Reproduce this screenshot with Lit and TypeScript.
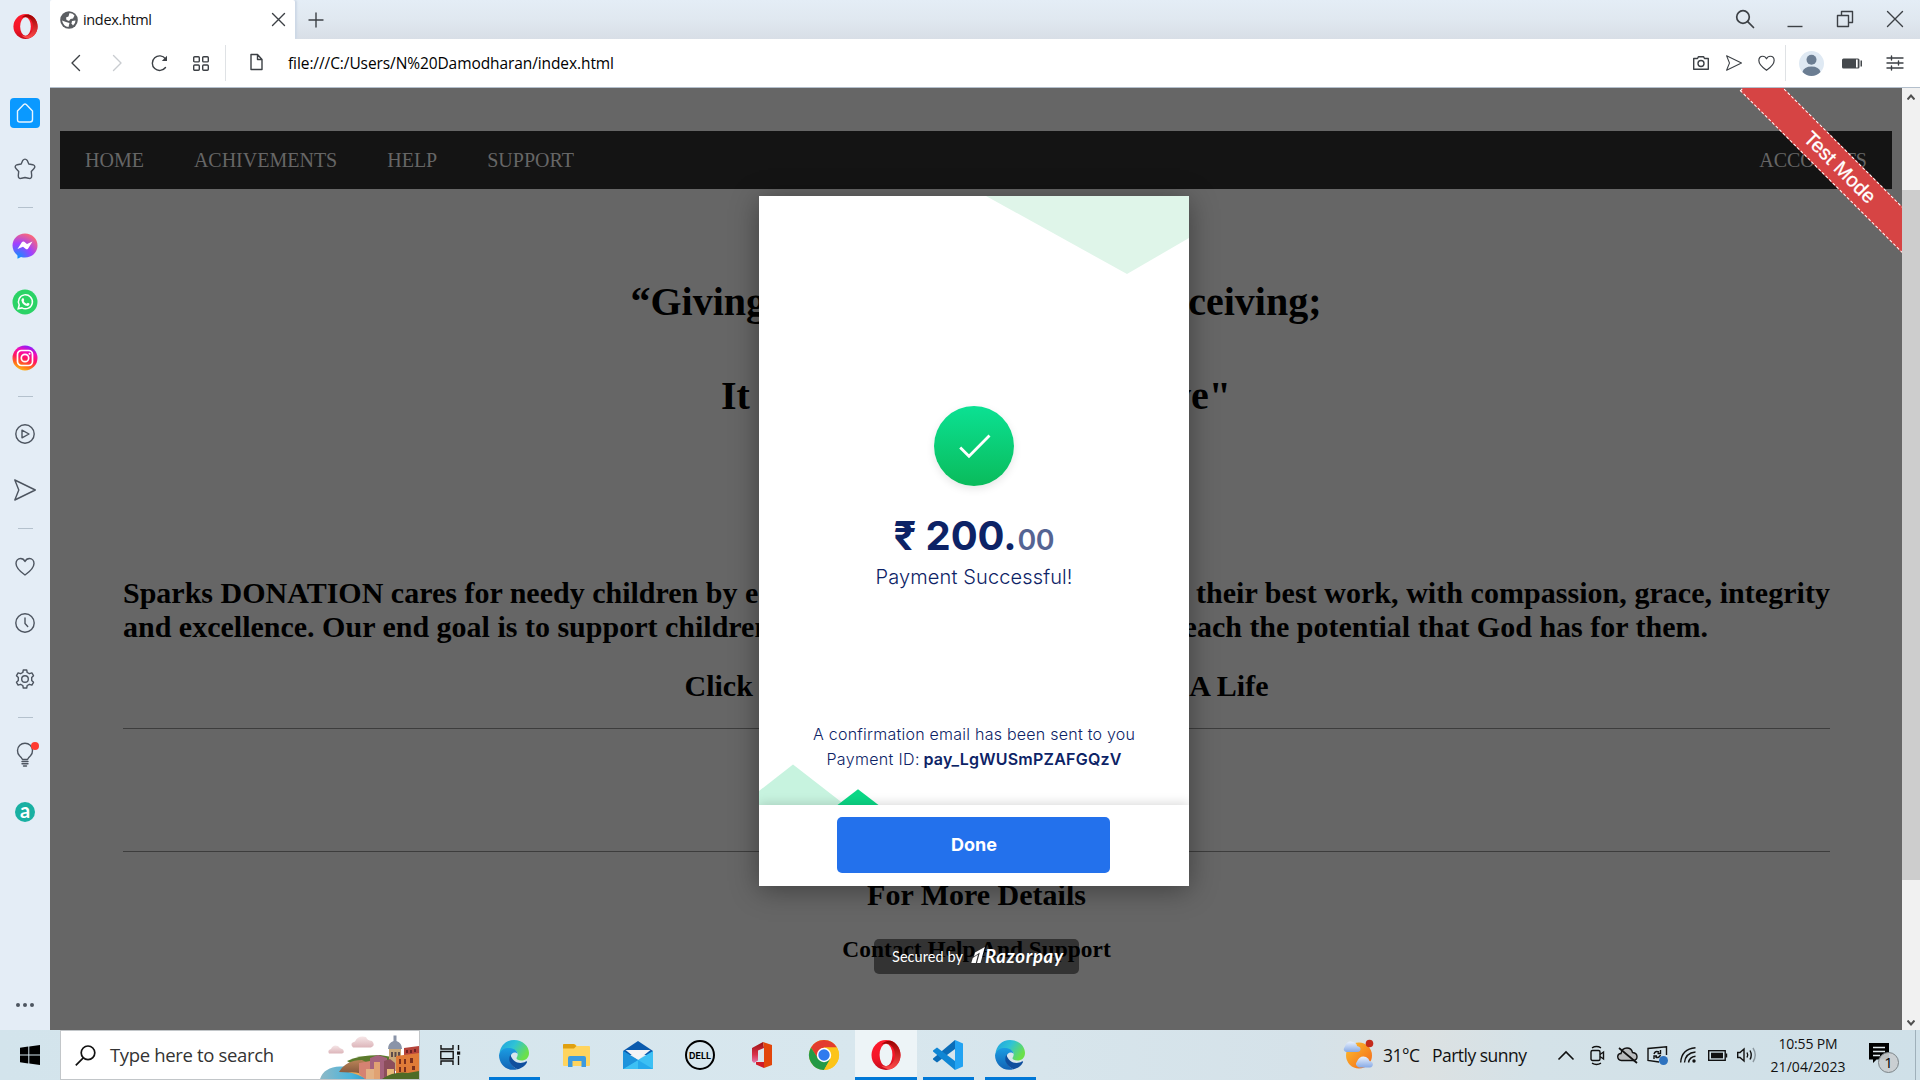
import { LitElement, html, svg, css } from "lit";
import { customElement, property } from "lit/decorators.js";

/* Single-line label whose tracking is adjusted so it spans a given width. */
@customElement("fit-text")
class FitText extends LitElement {
  static styles = css`
    :host { display: inline-block; white-space: pre; }
    .t { display: inline-block; }
  `;
  @property() label = "";
  @property({ type: Number }) span = 0;
  render() {
    return html`<span class="t">${this.label}</span>`;
  }
  firstUpdated() {
    const el = this.renderRoot.querySelector(".t") as HTMLElement;
    if (!this.span) return;
    const gap = (this.span - el.getBoundingClientRect().width) / (this.label.length - 1);
    el.style.letterSpacing = gap + "px";
    el.style.marginRight = -gap + "px";
  }
}

const fit = (label: string, span: number) => html`<fit-text .label=${label} .span=${span}></fit-text>`;
const icon = (w: number, h: number, body: unknown, cls = "line") =>
  html`<svg class=${cls} width=${w} height=${h} viewBox="0 0 ${w} ${h}">${body}</svg>`;

const operaLogo = (s: number) => html`<svg width=${s} height=${s} viewBox="0 0 30 30">
  <defs>
    <linearGradient id="opA" x1="0" y1="0" x2="0" y2="1"><stop offset="0" stop-color="#ff1b2d"/><stop offset=".6" stop-color="#f31628"/><stop offset="1" stop-color="#c20a1a"/></linearGradient>
    <linearGradient id="opB" x1="0" y1="0" x2="0" y2="1"><stop offset="0" stop-color="#9c0000"/><stop offset="1" stop-color="#ff4b4b"/></linearGradient>
  </defs>
  <ellipse cx="15" cy="15" rx="14.5" ry="15" fill="url(#opA)"/>
  <path d="M10 4.500C13 1.500 17 .2 19.500.8C26 2.500 29.500 9 29.500 15S26 27.500 19.500 29.200C17 29.800 13 28.500 10 25.500C20 29 24 21 24 15S20 1 10 4.500Z" fill="url(#opB)"/>
  <ellipse cx="15" cy="15" rx="6.400" ry="11.200" fill="var(--hole, #e4edf6)"/>
</svg>`;

const edgeLogo = () => html`<svg width="30" height="30" viewBox="0 0 30 30">
  <defs>
    <linearGradient id="edA" x1="0" y1="0" x2="1" y2=".5"><stop offset="0" stop-color="#1f9fe0"/><stop offset=".5" stop-color="#2fc3d6"/><stop offset="1" stop-color="#6be04a"/></linearGradient>
    <linearGradient id="edB" x1="0" y1="0" x2="0" y2="1"><stop offset="0" stop-color="#1b9de2"/><stop offset="1" stop-color="#1263b5"/></linearGradient>
  </defs>
  <path d="M.5 14C1 6 7 0 15 0C23.500 0 30 6 30 13C30 18 26.500 20.500 22.500 20.500C19 20.500 17.200 19.200 17.500 18C18.500 16.500 19 15 18.500 13C17 8.500 6 7 .5 14Z" fill="url(#edA)"/>
  <path d="M0 15C1.500 9 7 7.500 11 8C15 8.500 18.500 11 18.600 14C16 11 11.500 13 11 18C10.500 23 14 28 19 29C9 32.500 0 25 0 15Z" fill="url(#edB)"/>
  <path d="M11.500 14.500C8.500 20 11 26 18.500 29.300C22.500 28.500 26.500 25.500 28 22.200C28.300 21.300 27.500 21 26.800 21.500C21 25 13 22 11.500 14.500Z" fill="#0f4f9e"/>
</svg>`;

const heart = (s: number) =>
  html`<svg class="line" width=${s} height=${s} viewBox="0 0 20 20"><path d="M10 18C5 14.500 1 11 1 6.500C1 3.500 3 1.500 5.500 1.500C7.500 1.500 9.200 2.700 10 4.500C10.800 2.700 12.500 1.500 14.500 1.500C17 1.500 19 3.500 19 6.500C19 11 15 14.500 10 18Z"/></svg>`;

const plane = (s: number) =>
  html`<svg class="line" width=${s} height=${s} viewBox="0 0 22 22"><path d="M.8 1L21.300 11L.8 21L4.800 11Z"/></svg>`;

@customElement("side-bar")
class SideBar extends LitElement {
  static styles = css`
    :host { display: flex; flex-direction: column; width: 50px; height: 1030px; background: #e4edf6; align-items: center; box-sizing: border-box; padding-top: 6px; }
    svg { display: block; overflow: visible; }
    .line { fill: none; stroke: #4d5560; stroke-width: 1.4; stroke-linejoin: round; stroke-linecap: round; }
    .slot { height: 40px; display: flex; align-items: center; justify-content: center; flex: none; }
    .group { display: flex; flex-direction: column; gap: 16px; }
    .first { margin-top: 47px; }
    .home { width: 30px; height: 30px; border-radius: 4px; background: #0a99ff; display: flex; align-items: center; justify-content: center; }
    .home .line { stroke: #e8f5ff; }
    .rule { width: 15px; height: 1px; background: #b4c1cd; margin: 18px 0 17.5px 0; flex: none; }
    .more { margin-top: auto; margin-bottom: 5px; }
    .amz { margin-top: 1px; }
    .badge-a { font: 700 20px/20px Lato, sans-serif; fill: #fff; stroke: none; }
  `;
  render() {
    return html`
      <div class="slot">${operaLogo(25)}</div>
      <div class="group first">
        <div class="slot"><span class="home">${icon(20, 22, svg`<path d="M2.500 9L8.700 2.500Q10 1.300 11.300 2.500L17.500 9V17.500Q17.500 20 15 20H5Q2.500 20 2.500 17.500Z"/>`)}</span></div>
        <div class="slot">${icon(22, 22, svg`<path d="M8.700 2.500Q11-.3 13.300 2.500L14.800 6L18.800 6.700Q22.300 8 19.800 10.800L17.300 13.500L17.700 17.500Q17.800 21.300 14.400 20.200L11 19.500L7.600 20.200Q4.200 21.300 4.300 17.500L4.700 13.500L2.200 10.800Q-.3 8 3.200 6.700L7.200 6Z"/>`)}</div>
      </div>
      <div class="rule"></div>
      <div class="group">
        <div class="slot">${icon(26, 26, svg`
          <defs><radialGradient id="ms" cx=".2" cy="1" r="1.100"><stop offset="0" stop-color="#0099ff"/><stop offset=".55" stop-color="#a040ff"/><stop offset="1" stop-color="#ff6a72"/></radialGradient></defs>
          <path d="M13 .5C20 .5 25.500 5.600 25.500 12.500S20 24.500 13 24.500Q11 24.500 9 24L5.500 25.800V22.400Q.5 18.500.5 12.500C.5 5.600 6 .5 13 .5Z" fill="url(#ms)"/>
          <path d="M5.500 16L10 9Q11 8 12.200 8.800L15 11L20.500 8.600L16 15.700Q15 16.800 13.800 16L11 13.800Z" fill="#fff"/>`, "")}</div>
        <div class="slot">${icon(26, 26, svg`
          <circle cx="13" cy="13" r="12.500" fill="#2bd366"/>
          <path d="M6.200 19.800L7.200 16A7 7 0 1 1 10 18.900Z" fill="none" stroke="#fff" stroke-width="1.500"/>
          <path d="M10.500 9.300Q11.300 8.800 11.700 9.700L12.200 11Q12.200 11.500 11.600 12.100Q12.500 14 14.600 14.800L15.600 13.900Q16 13.700 17.600 14.700Q17.600 16.700 15.600 16.900Q10.500 16.500 9.400 11.500Q9.400 10 10.500 9.300Z" fill="#fff"/>`, "")}</div>
        <div class="slot">${icon(26, 26, svg`
          <defs><linearGradient id="ig" x1=".25" y1="1" x2=".6" y2="0"><stop offset="0" stop-color="#ffc414"/><stop offset=".25" stop-color="#ff6a1a"/><stop offset=".5" stop-color="#ff1660"/><stop offset=".75" stop-color="#f60eb0"/><stop offset="1" stop-color="#8a1cff"/></linearGradient></defs>
          <circle cx="13" cy="13" r="12.500" fill="url(#ig)"/>
          <rect x="5.500" y="5.500" width="15" height="15" rx="4" fill="none" stroke="#fff" stroke-width="1.700"/>
          <circle cx="13" cy="13" r="3.700" fill="none" stroke="#fff" stroke-width="1.700"/><circle cx="17.500" cy="8.700" r="1" fill="#fff"/>`, "")}</div>
      </div>
      <div class="rule"></div>
      <div class="group">
        <div class="slot">${icon(20, 20, svg`<circle cx="10" cy="10" r="9.200"/><path d="M7 6.200V13.800L14 10Z"/>`)}</div>
        <div class="slot">${plane(22)}</div>
      </div>
      <div class="rule"></div>
      <div class="group">
        <div class="slot">${heart(20)}</div>
        <div class="slot">${icon(20, 20, svg`<circle cx="10" cy="10" r="9.200"/><path d="M10 5V10.500L12.700 13.500"/>`)}</div>
        <div class="slot">${icon(20, 20, svg`<circle cx="10" cy="10" r="3.300"/><path d="M8.300 1H11.700L12.200 3.500L14.400 4.700L16.900 3.900L18.500 6.700L16.700 8.600V11.400L18.500 13.300L16.900 16.100L14.400 15.300L12.200 16.500L11.700 19H8.300L7.800 16.500L5.600 15.300L3.100 16.100L1.500 13.300L3.300 11.400V8.600L1.500 6.700L3.100 3.900L5.600 4.700L7.800 3.500Z"/>`)}</div>
      </div>
      <div class="rule"></div>
      <div class="group">
        <div class="slot">${icon(20, 24, svg`<path d="M7.500 16.500Q7 15 4.500 12.800A7.500 7.500 0 1 1 15.500 12.800Q13 15 12.500 16.500Z"/><path d="M7 18.500H13M7 20.800H13M8.500 23H11.500"/><circle cx="20" cy="3" r="4" fill="#ff3a30" stroke="none"/>`)}</div>
        <div class="slot amz">${icon(20, 20, svg`<circle cx="10" cy="10" r="10" fill="#19b0a2"/><text x="10" y="15.500" text-anchor="middle" class="badge-a">a</text>`, "")}</div>
      </div>
      <div class="slot more">${icon(20, 4, svg`<circle cx="3" cy="2" r="2" fill="#4d5560"/><circle cx="10" cy="2" r="2" fill="#4d5560"/><circle cx="17" cy="2" r="2" fill="#4d5560"/>`, "")}</div>
    `;
  }
}

@customElement("browser-chrome")
class BrowserChrome extends LitElement {
  static styles = css`
    :host { display: block; height: 88px; font-family: "Open Sans", "Noto Sans", sans-serif; color: #111; }
    svg { display: block; overflow: visible; }
    .line { fill: none; stroke: #3c4045; stroke-width: 1.4; stroke-linejoin: round; stroke-linecap: round; }
    .tabs { height: 39px; display: flex; background: linear-gradient(#e4edf6, #e0e8f0 50%, #d8dee6); }
    .tab { width: 245px; box-sizing: border-box; padding: 0 10px; background: #fff; display: flex; align-items: center; border-radius: 2px 2px 0 0; box-shadow: 2px 0 2px #cdd8e6; }
    .title { font-size: 14.5px; line-height: 20px; margin-left: 5px; flex: 1; }
    .plus { margin: 12.5px 0 0 13.5px; }
    .win { margin-left: auto; display: grid; grid-template-columns: 50px 50px 50px 50px; justify-items: center; align-items: center; height: 38px; }
    .bar { position: relative; height: 49px; background: #fff; display: flex; align-items: center; box-sizing: border-box; border-bottom: 1px solid #b3bfcc; }
    .nav { display: grid; grid-template-columns: repeat(4, 42px); justify-items: center; align-items: center; margin-left: 4px; }
    .dim { stroke: #c9ccd0; }
    .sep { width: 1px; height: 36px; background: #dfe2e5; margin-left: 3px; }
    .doc { width: 60px; margin-right: 2px; display: flex; justify-content: center; margin-top: -2px; }
    .url { font-size: 15.5px; line-height: 22px; color: #000; }
    .right { margin-left: auto; display: grid; grid-template-columns: 33px 33px 31px 7px 46px 35px 50.5px; justify-items: center; align-items: center; }
    .right .sep { margin-left: 0; }
  `;
  render() {
    return html`
      <div class="tabs">
        <div class="tab">
          ${icon(18, 18, svg`<circle cx="9" cy="9" r="8.800" fill="#5a5d61"/><path d="M9.500 2Q13 2 14.500 4.500L13 7.500L10.500 8L9 10L6.500 9L6 6.500L8.500 5.500Z" fill="#fff"/><path d="M2 9.500L6 11L9.500 12L8.500 16Q3.500 15.500 2 9.500Z" fill="#fff"/><path d="M12 10L15.500 9.500Q15.500 12.500 13 14.500L11.500 12.500Z" fill="#fff"/>`, "")}
          <span class="title">${fit("index.html", 69)}</span>
          ${icon(13, 13, svg`<path d="M.5.5L12.500 12.500M12.500.5L.5 12.500"/>`)}
        </div>
        <div class="plus">${icon(14, 14, svg`<path d="M7 0V14M0 7H14"/>`)}</div>
        <div class="win">
          ${icon(18, 18, svg`<circle cx="7" cy="7" r="6.300" stroke-width="1.700"/><path d="M11.700 11.700L17.500 17.500" stroke-width="1.700"/>`)}
          ${icon(16, 16, svg`<path d="M.5 15.500H15.500" stroke-linecap="butt"/>`)}
          ${icon(16, 16, svg`<path d="M.5 4.500H11.500V15.500H.5ZM4.500 4.500V.5H15.500V11.500H11.500"/>`)}
          ${icon(16, 16, svg`<path d="M.5.5L15.500 15.500M15.500.5L.5 15.500"/>`)}
        </div>
      </div>
      <div class="bar">
        <div class="nav">
          ${icon(9, 16, svg`<path d="M8.500.5L1 8L8.500 15.500"/>`)}
          <svg class="line dim" width="9" height="16" viewBox="0 0 9 16"><path d="M.5.5L8 8L.5 15.500"/></svg>
          ${icon(17, 17, svg`<path d="M14.500 12.500A7.300 7.300 0 1 1 14.500 3.800"/><path d="M16 .8V6H10.800Z" fill="#3c4045" stroke="none"/>`)}
          ${icon(16, 15, svg`<rect x=".7" y=".7" width="5.600" height="5.200" rx="1"/><rect x="9.700" y=".7" width="5.600" height="5.200" rx="1"/><rect x=".7" y="9" width="5.600" height="5.200" rx="1"/><rect x="9.700" y="9" width="5.600" height="5.200" rx="1"/>`)}
        </div>
        <div class="sep"></div>
        <div class="doc">${icon(13, 16, svg`<path d="M1 .5H7.500L12 5.500V15.500H1ZM7.500.5V5.500H12"/>`)}</div>
        <span class="url">${fit("file:///C:/Users/N%20Damodharan/index.html", 326)}</span>
        <div class="right">
          ${icon(16, 14, svg`<path d="M.7 2.500H4.500L5.500.7H10.500L11.500 2.500H15.300V13.300H.7Z"/><circle cx="8" cy="7.500" r="3"/>`)}
          ${plane(16)}
          ${heart(17)}
          <div class="sep"></div>
          ${icon(25, 25, svg`<circle cx="12.500" cy="12.500" r="12.500" fill="#dfe9f3"/><circle cx="12.500" cy="8.700" r="5" fill="#6b7d92"/><path d="M3.500 21Q5 15.500 12.500 15.500T21.500 21Q17.500 25 12.500 25T3.500 21Z" fill="#6b7d92"/>`, "")}
          ${icon(20, 11, svg`<rect x="0" y=".5" width="17.500" height="10" rx="1.500" fill="#44484c"/><rect x="14" y="1.500" width="1.700" height="8" fill="#fff"/><rect x="18.500" y="2.500" width="1.500" height="6" fill="#44484c"/>`, "")}
          ${icon(16, 14, svg`<path d="M0 2H16M0 7H16M0 12H16M4.500 0V4M11.500 5V9M4.500 10V14"/>`)}
        </div>
      </div>
    `;
  }
}

@customElement("pay-dialog")
class PayDialog extends LitElement {
  static styles = css`
    :host { display: block; width: 430px; height: 690px; background: #fff; color: #0d2366; font-family: Inter, "Noto Sans", sans-serif; box-shadow: 0 4px 26px rgba(0, 0, 0, .38); }
    .body { position: relative; height: 609px; box-sizing: border-box; padding-top: 210px; display: flex; flex-direction: column; align-items: center; overflow: hidden; }
    .deco { position: absolute; inset: 0; }
    .tick { position: relative; width: 80px; height: 80px; border-radius: 50%; background: linear-gradient(#0be193, #0abb5b); box-shadow: 0 3px 8px rgba(0, 0, 0, .1); flex: none; }
    .tick svg { display: block; }
    .amount { position: relative; margin-top: 26px; height: 48px; line-height: 48px; font-size: 40px; font-weight: 700; display: flex; align-items: baseline; gap: 1px; }
    .paise { font-size: 28.5px; font-weight: 600; opacity: .7; }
    .ok { position: relative; margin-top: 5px; font-size: 20px; line-height: 24px; font-weight: 300; }
    .note { position: relative; margin-top: 133px; font-size: 16px; line-height: 25px; font-weight: 300; text-align: center; }
    .row { display: flex; justify-content: center; gap: 4px; }
    .id { font-weight: 600; }
    .foot { position: relative; height: 81px; box-sizing: border-box; padding: 12px 79px 13px 78px; background: #fff; box-shadow: 0 -2px 10px rgba(0, 0, 0, .14); clip-path: inset(-12px 0 0 0); }
    .done { display: block; width: 273px; height: 56px; border: 0; border-radius: 5px; background: #2371ec; color: #fff; font: 700 18px/56px Inter, sans-serif; padding: 0 0 0 1px; }
  `;
  render() {
    return html`
      <div class="body">
        <svg class="deco" width="430" height="609" viewBox="0 0 430 609">
          <path d="M227 0L368 78L430 42V0Z" fill="#dff5e9"/>
          <path d="M0 595L34 568.500L81 605L85 609H0Z" fill="#c7f3df"/>
          <path d="M78.500 609L99 593.300L119.500 609Z" fill="#0bd886"/>
        </svg>
        <div class="tick"><svg width="80" height="80" viewBox="0 0 80 80"><path d="M26.200 41.500L35 50.300L55.500 29.500" fill="none" stroke="#fff" stroke-width="2.800"/></svg></div>
        <div class="amount"><span>${fit("₹ 200.", 123)}</span><span class="paise">${fit("00", 37)}</span></div>
        <div class="ok">${fit("Payment Successful!", 197)}</div>
        <div class="note">
          <div class="row">${fit("A confirmation email has been sent to you", 322)}</div>
          <div class="row">${fit("Payment ID:", 93)}<span class="id">${fit("pay_LgWUSmPZAFGQzV", 198)}</span></div>
        </div>
      </div>
      <div class="foot"><button class="done">${fit("Done", 46)}</button></div>
    `;
  }
}

@customElement("web-page")
class WebPage extends LitElement {
  static styles = css`
    :host { display: block; position: relative; width: 1852px; height: 942px; background: #666; overflow: hidden; font-family: "Liberation Serif", "Times New Roman", serif; color: #000; }
    .menu { display: flex; margin: 43px 10px 0; height: 58px; background: #141414; color: #666; font-size: 20px; line-height: 58px; }
    .menu span { padding: 0 25px; }
    .menu .end { margin-left: auto; }
    .split { display: flex; justify-content: space-between; white-space: nowrap; font-weight: 700; margin: 0 auto; }
    .h1 { font-size: 40px; line-height: 46px; }
    .q1 { width: 691px; margin-top: 90px; }
    .q2 { width: 510px; margin-top: 48px; }
    .h2 { font-size: 30px; line-height: 34px; }
    .content { margin: 157px 72px 0 73px; }
    .p1 { width: 1707px; }
    .p2 { width: 1585px; margin-left: 0; }
    .cta { width: 584px; margin-top: 25px; }
    .hr { height: 1px; background: #3d3d3d; }
    .r1 { margin-top: 25px; }
    .r2 { margin-top: 122px; }
    .center { text-align: center; font-weight: 700; }
    .more { margin-top: 26px; }
    .help { font-size: 23.4px; line-height: 26px; margin-top: 24px; }
    .dialog { position: absolute; left: 709px; top: 108px; }
    .ribbon { position: absolute; left: 1665px; top: 63px; width: 250px; height: 32.500px; box-sizing: border-box; border: 1px dashed #fff; background: #d64444; color: #fff; font: 20px/30px "Liberation Sans", Arial, sans-serif; -webkit-text-stroke: .3px #fff; text-align: center; transform: rotate(45deg); }
    .secured { position: absolute; left: 824px; top: 851px; width: 205px; height: 35px; box-sizing: border-box; padding: 0 15px 0 18px; border-radius: 5px; background: rgba(0, 0, 0, .5); color: #fff; display: flex; align-items: center; font: 14.5px/35px Lato, sans-serif; }
    .mark { margin: 0 0 3px 8px; }
    .brand { font: italic 700 18.5px/35px Lato, sans-serif; }
  `;
  render() {
    return html`
      <div class="menu"><span>HOME</span><span>ACHIVEMENTS</span><span>HELP</span><span>SUPPORT</span><span class="end">ACCOUNTS</span></div>
      <div class="split h1 q1"><span>“Giving</span><span>ceiving;</span></div>
      <div class="split h1 q2"><span>It</span><span>ve"</span></div>
      <div class="content">
        <div class="split h2 p1"><span>Sparks DONATION cares for needy children by e</span>${fit("their best work, with compassion, grace, integrity", 634)}</div>
        <div class="split h2 p2"><span>and excellence. Our end goal is to support children</span><span>each the potential that God has for them.</span></div>
        <div class="split h2 cta"><span>Click</span><span>A Life</span></div>
        <div class="hr r1"></div>
        <div class="hr r2"></div>
        <div class="center h2 more">For More Details</div>
        <div class="center help">Contact Help And Support</div>
      </div>
      <pay-dialog class="dialog"></pay-dialog>
      <div class="secured">
        ${fit("Secured by", 71)}
        <svg class="mark" width="14" height="16" viewBox="0 0 14 16"><path d="M4 5.500L13.800 0L9.500 16H6L8.800 5.400L3 9.500ZM1.800 11L7 7.500L4.800 16H.3Z" fill="#fff"/></svg>
        <span class="brand">${fit("Razorpay", 78)}</span>
      </div>
      <div class="ribbon">Test Mode</div>
    `;
  }
}

@customElement("task-bar")
class TaskBar extends LitElement {
  static styles = css`
    :host { display: flex; width: 1920px; height: 50px; background: linear-gradient(90deg, #d3e4ec, #d8e7ee 45%, #d5e2e9 68%, #dce1e2 74%, #d4e2e8 80%, #cfe0e8); font-family: "Open Sans", "Noto Sans", sans-serif; color: #111; }
    svg { display: block; overflow: visible; }
    .line { fill: none; stroke: #111; stroke-width: 1.4; }
    .start { width: 60px; display: flex; align-items: center; justify-content: center; }
    .search { width: 360px; height: 50px; box-sizing: border-box; border: 1px solid #c2c6c9; background: #fff; display: flex; align-items: center; padding-left: 14px; color: #333; font-size: 18.5px; }
    .search .label { margin-left: 14px; flex: 1; padding-bottom: 2px; }
    .city { align-self: flex-end; overflow: hidden; }
    .apps { display: flex; }
    .app { width: 62px; height: 50px; display: flex; flex-direction: column; align-items: center; justify-content: center; position: relative; box-sizing: border-box; }
    .open::after { content: ""; position: absolute; left: 6px; right: 5px; bottom: 0; height: 3px; background: #0078d7; }
    .active { background: #edf4f7; --hole: #edf4f7; }
    .active::after { left: 0; right: 0; }
    .view { width: 63px; padding-right: 3px; }
    .tray { margin-left: auto; display: flex; align-items: center; }
    .weather { display: flex; align-items: center; gap: 9px; font-size: 17.5px; margin-right: 23px; }
    .temps { display: flex; gap: 12px; }
    .cells { display: grid; grid-template-columns: 32px 31px 29px 30px 31px 29px 29px; justify-items: center; align-items: center; }
    .clock { width: 76px; margin-left: 9px; font-size: 14px; line-height: 23px; text-align: center; }
    .bell { margin: 6px 4px 0 23px; width: 42px; }
    .edge { width: 1px; height: 50px; background: #9fb0ba; margin-right: 4px; }
    .dell { font: 700 9px/10px Inter, sans-serif; }
    .num { font: 15px/16px "Open Sans", sans-serif; }
  `;
  render() {
    return html`
      <div class="start">${icon(20, 20, svg`<path d="M0 2.800L8.300 1.600V9.600H0ZM9.300 1.500L20 0V9.600H9.300ZM0 10.500H8.300V18.500L0 17.300ZM9.300 10.500H20V20L9.300 18.600Z" fill="#000"/>`, "")}</div>
      <div class="search">
        ${icon(21, 21, svg`<circle cx="13" cy="7.800" r="6.800" stroke-width="1.700"/><path d="M8.300 12.800L.8 20.300" stroke-width="1.700"/>`)}
        <span class="label">${fit("Type here to search", 164)}</span>
        <svg class="city" width="99" height="44" viewBox="0 0 99 44">
          <defs>
            <linearGradient id="sea" x1="0" x2="1"><stop offset="0" stop-color="#8fb9c6"/><stop offset=".6" stop-color="#4ab4dc"/><stop offset="1" stop-color="#2795c9"/></linearGradient>
            <linearGradient id="rock" x1="0" x2="0" y1="0" y2="1"><stop offset="0" stop-color="#b98357"/><stop offset="1" stop-color="#6f4632"/></linearGradient>
            <linearGradient id="cl" x1="0" x2="0" y1="0" y2="1"><stop offset="0" stop-color="#f6e6e7"/><stop offset="1" stop-color="#dcb5ba"/></linearGradient>
          </defs>
          <path d="M9 18.500Q7 15 11 14Q13 9 18 11Q20 14 23 14.500Q25 18 22 18.500Z" fill="url(#cl)"/>
          <path d="M33 12.500Q29 8 35 6.500Q38 0 46 2Q47 5.500 52 6Q56 10.500 51 12.500Z" fill="url(#cl)"/>
          <path d="M0 44Q4 32 20 31.500Q34 31 42 36L52 44Z" fill="url(#sea)"/>
          <path d="M27 26Q38 20 60 20L78 23V34H40Z" fill="#5b7a2c"/>
          <path d="M19 37Q26 25 42 25L54 31V44Q42 37 19 37Z" fill="url(#rock)"/>
          <path d="M28 37Q44 37 56 44H46Q38 39 28 37Z" fill="#e8a957"/>
          <path d="M73.500.5H76.500V6Q82 8 82 14H68Q68 8 73.500 6Z" fill="#8a94a8"/><path d="M69 14H81V36H69Z" fill="#c9a878"/>
          <path d="M71 17h2v5h-2zM74.500 17h2v5h-2zM78 17h2v5h-2z" fill="#5b4a4a"/>
          <path d="M84 13L99 11V20H84Z" fill="#b5433a"/><path d="M86 15h2v3h-2zM90 15h2v3h-2zM94 14h2v3h-2z" fill="#6e2323"/><path d="M76 21L99 18V44H76Z" fill="#e07b38"/>
          <path d="M79 24h2v5h-2zM84 24h2v5h-2zM90 23h3v5h-3zM79 32h2v5h-2zM84 32h2v5h-2zM92 31h3v4h-3z" fill="#7c2f1d"/>
          <path d="M39 28L50 26V44H45L39 39Z" fill="#d58272"/><path d="M50 23L58 20L67 23V44H50Z" fill="#a4627d"/>
          <path d="M54 27H60V44H54Z" fill="#e0a273"/><path d="M64 26L70 24L75 28V44H64Z" fill="#8c4e5c"/><path d="M46 34H54V44H46Z" fill="#e3b184"/>
          <path d="M67 34H74V44H67Z" fill="#e9ba79"/>
          <path d="M62 44Q74 36 88 38L99 36V44Z" fill="#4f6b25"/>
        </svg>
      </div>
      <div class="apps">
        <div class="app view">${icon(20, 20, svg`<path d="M1 0V4H13V0M1 20V16H13V20M.8 6.500H13.200V13.800H.8ZM18.500 0V5M18.500 11V20"/><rect x="17" y="6.500" width="3.200" height="3.200" fill="#111" stroke="none"/>`)}</div>
        <div class="app open">${edgeLogo()}</div>
        <div class="app">${icon(27, 23, svg`<path d="M0 1Q0 0 1 0H11Q13 0 13.500 2H26Q27 2 27 3V21Q27 22 26 22H1Q0 22 0 21Z" fill="#ffd45e"/><path d="M0 1Q0 0 1 0H11L13.500 2L11 4.500H0Z" fill="#e0a010"/><path d="M5 23V14Q5 12 7 12H21Q23 12 23 14V23H18.500V17H9.500V23Z" fill="#3d9be0"/>`, "")}</div>
        <div class="app">${icon(30, 28, svg`<path d="M0 10L15 0L30 10V14H0Z" fill="#0a5aad"/><path d="M2.500 9H27.500L15 19Z" fill="#f4f4f6"/><path d="M0 10L30 28H0Z" fill="#1e9fe8"/><path d="M30 10L0 28H30Z" fill="#3dc0f4"/><path d="M0 10L15 19L0 28Z" fill="#1e93dc"/><path d="M15 19L30 28H15Z" fill="#27aaec"/>`, "")}</div>
        <div class="app">${icon(30, 30, svg`<circle cx="15" cy="15" r="14" fill="none" stroke="#000" stroke-width="2"/><text x="4" y="18.500" textLength="22" lengthAdjust="spacingAndGlyphs" class="dell">DELL</text>`, "")}</div>
        <div class="app">${icon(20, 26, svg`<defs><linearGradient id="of" x1="0" y1="0" x2="0" y2="1"><stop offset="0" stop-color="#9c1010"/><stop offset=".6" stop-color="#d8324a"/><stop offset="1" stop-color="#e77bb0"/></linearGradient></defs><path d="M0 6L11 0L12 6L6 8.500V18.500L2 21L0 19Z" fill="url(#of)"/><path d="M11 0L20 3V23L12 26V5.500Z" fill="#e2460b"/><path d="M4 20H12V26L4 22.500Z" fill="#d11a28"/>`, "")}</div>
        <div class="app">${icon(30, 30, svg`<circle cx="15" cy="15" r="15" fill="#fcc419"/><path d="M2 7.500A15 15 0 0 1 28 7.500H15L9 19Z" fill="#e33b2e"/><path d="M2 7.500A15 15 0 0 0 15 30L21.500 18.700L15 20L9 18.500Z" fill="#249a45"/><path d="M15 30A15 15 0 0 0 28 7.500H15L21.500 18.500Z" fill="#fcc419"/><circle cx="15" cy="15" r="7.200" fill="#fff"/><circle cx="15" cy="15" r="5.700" fill="#2f7bee"/>`, "")}</div>
        <div class="app open active">${operaLogo(30)}</div>
        <div class="app open">${icon(30, 30, svg`<path d="M22 0L30 3.500V26.500L22 30Z" fill="#23a3f2"/><path d="M22 0V9L4 22.500L0 19.500V18.500Z" fill="#0b6db8"/><path d="M22 30V21L4 7.500L0 10.500V11.500Z" fill="#0f86d4"/>`, "")}</div>
        <div class="app open">${edgeLogo()}</div>
      </div>
      <div class="tray">
        <div class="weather">
          ${icon(31, 28, svg`<defs><linearGradient id="sun" x1="0" y1="0" x2="1" y2="1"><stop offset="0" stop-color="#fcc02d"/><stop offset="1" stop-color="#f4661b"/></linearGradient><linearGradient id="wc" x1="0" y1="0" x2="0" y2="1"><stop offset="0" stop-color="#e9f1fd"/><stop offset="1" stop-color="#86a9e6"/></linearGradient></defs><circle cx="16" cy="14.500" r="13" fill="url(#sun)"/><path d="M3 11Q-1 9 2 5.500Q4-1 10 1Q14 2 14 5Q19 6 17 10Q16 11 14 11Z" fill="url(#wc)"/><path d="M16 26.500Q11 24 14 20.500Q17 14 23 16Q26 17.500 26.500 20Q31 21 29.500 25Q28 27 26 26.500Z" fill="url(#wc)"/><circle cx="26.500" cy="2.500" r="3.800" fill="#c42b1c"/>`, "")}
          <div class="temps">${fit("31°C", 37)}${fit("Partly sunny", 95)}</div>
        </div>
        <div class="cells">
          ${icon(16, 9, svg`<path d="M.5 8.500L8 1L15.500 8.500" stroke-width="1.600"/>`)}
          ${icon(15, 19, svg`<rect x="1" y="4.500" width="9" height="10" rx="1.500"/><path d="M10 8.500L13.500 6V13L10 10.500M2 1.800Q6.500-.8 11 1.800M2 17.200Q6.500 19.800 11 17.200"/>`)}
          ${icon(21, 16, svg`<path d="M4.500 13.500Q.7 13 .7 9.500Q1 6.500 4 6.500Q5 1 10 1Q14.500 1 15.500 5.500Q20 6 20 9.800Q20 13 16.500 13.500Z" fill="#b9bcbe"/><path d="M2 1L20 16" stroke-width="1.700"/>`)}
          ${icon(21, 18, svg`<path d="M19.500 9V.8L1 2.500V14.500L12 16"/><path d="M7 8Q8 4.500 12 6M13.500 4V7.500H10.500M13.500 9Q12 12.500 8.500 11M7 13V10H10"/><circle cx="16.500" cy="14.500" r="4.500" fill="#2d72bf" stroke="none"/>`)}
          ${icon(16, 16, svg`<path d="M.7 15.500Q1.500 2 15.500.8M4.500 15.500Q5.500 6 15.500 5M8.500 15.500Q9.500 10 15.500 9.300"/><circle cx="14" cy="14" r="1.700" fill="#111" stroke="none"/>`)}
          ${icon(19, 11, svg`<rect x=".7" y=".7" width="16.500" height="9.600"/><rect x="3" y="2.700" width="12" height="5.600" fill="#111" stroke="none"/><path d="M18.500 3.500V7.500"/>`)}
          ${icon(20, 16, svg`<path d="M.7 5.500H3L7 2V14L3 10.500H.7Z"/><path d="M10 5.500Q11.500 8 10 10.500M13 3.500Q15.500 8 13 12.500"/><path d="M16 1Q20.500 8 16 15" stroke="#8b979e"/>`)}
        </div>
        <div class="clock">${fit("10:55 PM", 59)}<br />${fit("21/04/2023", 75)}</div>
        <div class="bell">${icon(32, 30, svg`<path d="M0 0H20V16.500H7.500L4 20V16.500H0Z" fill="#000"/><path d="M4 4.500H16M4 8.500H16M4 12.500H11" stroke="#dfe8ec" stroke-width="1.300"/><circle cx="19.500" cy="19.500" r="10" fill="#c9cdd0" fill-opacity=".93" stroke="#7c8488"/><text x="19.500" y="25" text-anchor="middle" class="num">1</text>`, "")}</div>
        <div class="edge"></div>
      </div>
    `;
  }
}

@customElement("app-root")
class AppRoot extends LitElement {
  static styles = css`
    :host { display: grid; grid-template: 1030px 50px / 50px 1870px; width: 1920px; height: 1080px; overflow: hidden; background: #666; }
    .main { display: flex; flex-direction: column; }
    .view { display: flex; }
    .scroll { width: 18px; height: 942px; background: #f1f1f1; display: flex; flex-direction: column; justify-content: space-between; align-items: center; box-sizing: border-box; padding: 6px 0 4px; }
    .thumb { width: 18px; height: 690px; background: #cdcdcd; margin: 90px 0 auto; }
    .arrow { display: block; fill: none; stroke: #505050; stroke-width: 2; }
    task-bar { grid-column: 1 / 3; }
  `;
  render() {
    return html`
      <side-bar></side-bar>
      <div class="main">
        <browser-chrome></browser-chrome>
        <div class="view">
          <web-page></web-page>
          <div class="scroll">
            <svg class="arrow" width="8" height="6" viewBox="0 0 8 6"><path d="M.5 5.500L4 1.500L7.500 5.500"/></svg>
            <div class="thumb"></div>
            <svg class="arrow" width="8" height="6" viewBox="0 0 8 6"><path d="M.5.5L4 4.500L7.500.5"/></svg>
          </div>
        </div>
      </div>
      <task-bar></task-bar>
    `;
  }
}
